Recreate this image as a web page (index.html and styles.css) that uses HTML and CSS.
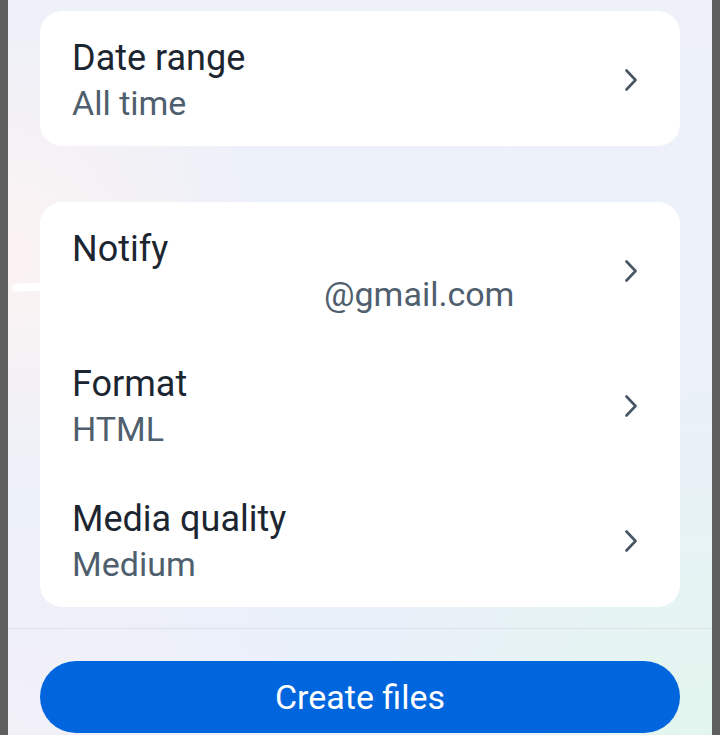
FILE: index.html
```html
<html>
	<head>
		<meta name="viewport" content="width=device-width, initial-scale=1.0">
		<link rel="stylesheet" href="styles.css">
	</head>

	<body>
		<div id='screen'>
			<div id='smudge'></div>
			<div id='settings'>
				<div class='card'>
					<div class='row'>
						<div class='text'>
							<div class='label'>Date range</div>
							<div class='value'>All time</div>
						</div>
						<svg class='chevron' width='12' height='22' viewBox='0 0 12 22'><path d='M1.5 1.5 L10.5 11 L1.5 20.5'/></svg>
					</div>
				</div>

				<div class='card'>
					<div class='row'>
						<div class='text'>
							<div class='label'>Notify</div>
							<div class='value'><span class='redacted'></span>@gmail.com</div>
						</div>
						<svg class='chevron' width='12' height='22' viewBox='0 0 12 22'><path d='M1.5 1.5 L10.5 11 L1.5 20.5'/></svg>
					</div>
					<div class='row'>
						<div class='text'>
							<div class='label'>Format</div>
							<div class='value'>HTML</div>
						</div>
						<svg class='chevron' width='12' height='22' viewBox='0 0 12 22'><path d='M1.5 1.5 L10.5 11 L1.5 20.5'/></svg>
					</div>
					<div class='row'>
						<div class='text'>
							<div class='label'>Media quality</div>
							<div class='value'>Medium</div>
						</div>
						<svg class='chevron' width='12' height='22' viewBox='0 0 12 22'><path d='M1.5 1.5 L10.5 11 L1.5 20.5'/></svg>
					</div>
				</div>
			</div>

			<div id='divider'></div>

			<div id='footer'>
				<button class='primary'>Create files</button>
			</div>
		</div>
	</body>
</html>
```

FILE: styles.css
```css
html, body {
	height: 100vh;
}

body {
	margin: 0;
	background: #5f5f5f;
	font-family: Roboto, 'Noto Sans', sans-serif;
	overflow: hidden;
}

#screen {
	position: relative;
	width: 704px;
	height: 100%;
	margin: 0 auto;
	overflow: hidden;
	background:
		radial-gradient(circle at 0% 35%, #fcf3f2 0, #fcf3f200 30%),
		radial-gradient(circle at 100% 100%, #e3f6ee 0, #e3f6ee00 35%),
		radial-gradient(circle at 0% 100%, #f3f0f8 0, #f3f0f800 30%),
		linear-gradient(#eef1f9, #e9f0fa);
}

#smudge {
	position: absolute;
	left: 4px;
	top: 283px;
	width: 40px;
	height: 8px;
	border-radius: 4px;
	background: #fff;
	transform: rotate(-3deg);
}

#settings {
	display: flex;
	flex-direction: column;
	gap: 56px;
	padding: 11px 32px 0;
}

.card {
	background: #fff;
	border-radius: 22px;
}

.row {
	display: flex;
	align-items: center;
	justify-content: space-between;
	padding: 25px 0 20px 32px;
}

.text {
	line-height: 45px;
}

.label {
	font-size: 36px;
	color: #1c2631;
}

.value {
	font-size: 34px;
	color: #4f5f6e;
}

.redacted {
	display: inline-block;
	width: 252px;
}

.chevron {
	margin-top: -2px;
	margin-right: 43px;
	fill: none;
	stroke: #475564;
	stroke-width: 2.6;
	stroke-linecap: round;
	stroke-linejoin: round;
}

#divider {
	margin-top: 21px;
	height: 1px;
	background: #dde2ea;
}

#footer {
	padding: 32px 32px 0;
}

.primary {
	display: block;
	width: 100%;
	height: 72px;
	border: none;
	border-radius: 36px;
	background: #0166dd;
	color: #fff;
	font-family: Roboto, 'Noto Sans', sans-serif;
	font-size: 34px;
}
```
